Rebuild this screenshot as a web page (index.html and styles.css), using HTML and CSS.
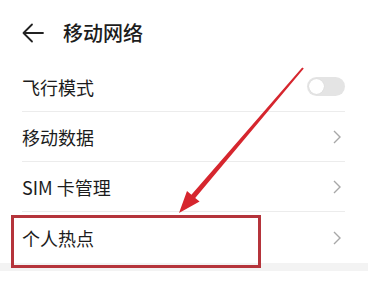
FILE: index.html
```html
<!DOCTYPE html>
<html lang="zh">
<head>
<meta charset="utf-8">
<link rel="stylesheet" href="styles.css">
</head>
<body>
<div class="page">
  <header class="header">
    <svg class="back" width="22" height="20" viewBox="0 0 22 20"><path d="M10 1.5 L1.5 10 L10 18.5 M1.5 10 H21" fill="none" stroke="#222" stroke-width="1.8" stroke-linecap="round" stroke-linejoin="round"/></svg>
    <h1 class="title">移动网络</h1>
  </header>
  <ul class="list">
    <li class="row"><span class="label">飞行模式</span><span class="toggle"><span class="knob"></span></span></li>
    <li class="row"><span class="label">移动数据</span><svg class="chev" width="8" height="14" viewBox="0 0 8 14"><path d="M1 1 L7 7 L1 13" fill="none" stroke="#a8a8a8" stroke-width="1.4"/></svg></li>
    <li class="row"><span class="label">SIM 卡管理</span><svg class="chev" width="8" height="14" viewBox="0 0 8 14"><path d="M1 1 L7 7 L1 13" fill="none" stroke="#a8a8a8" stroke-width="1.4"/></svg></li>
    <li class="row last"><span class="label">个人热点</span><svg class="chev" width="8" height="14" viewBox="0 0 8 14"><path d="M1 1 L7 7 L1 13" fill="none" stroke="#a8a8a8" stroke-width="1.4"/></svg></li>
  </ul>
  <div class="gap"></div>
  <div class="highlight"></div>
  <svg class="pointer" width="368" height="285" viewBox="0 0 368 285">
    <polygon points="303.8,68.6 195.2,197.9 199.6,201.6 179,213 187.0,190.9 191.4,194.7 302.2,67.4" fill="#d6262e"/>
  </svg>
</div>
</body>
</html>
```

FILE: styles.css
```css
html, body {
  margin: 0;
  padding: 0;
  background: #fff;
}
body {
  font-family: "Noto Sans CJK SC", "Noto Sans", sans-serif;
  color: #1c1c1c;
}
.page {
  position: relative;
  width: 368px;
  height: 285px;
  overflow: hidden;
  background: #fff;
}
.header {
  display: flex;
  align-items: center;
  height: 62px;
  padding: 4px 0 0 22px;
  box-sizing: border-box;
}
.back {
  display: block;
}
.title {
  margin: 0 0 0 19px;
  font-size: 20px;
  font-weight: 500;
  line-height: 24px;
  color: #1c1c1c;
}
.list {
  list-style: none;
  margin: 0;
  padding: 0 23px 0 22px;
}
.row {
  display: flex;
  align-items: center;
  justify-content: space-between;
  height: 49px;
  border-bottom: 1px solid #ececec;
}
.row.last {
  border-bottom: none;
  height: 51px;
}
.label {
  font-size: 18px;
  line-height: 22px;
  color: #1c1c1c;
}
.chev {
  display: block;
  margin-right: 4px;
}
.toggle {
  display: flex;
  align-items: center;
  width: 38px;
  height: 19px;
  border-radius: 10px;
  background: #e4e4e4;
  padding: 0 2px;
  box-sizing: border-box;
}
.knob {
  width: 15px;
  height: 15px;
  border-radius: 50%;
  background: #fff;
  box-shadow: 0 0 1px rgba(0,0,0,0.15);
}
.gap {
  height: 8px;
  background: #f3f3f3;
}
.highlight {
  position: absolute;
  left: 11px;
  top: 215px;
  width: 250px;
  height: 53px;
  box-sizing: border-box;
  border: 3px solid #b5343b;
}
.pointer {
  position: absolute;
  left: 0;
  top: 0;
}
```
